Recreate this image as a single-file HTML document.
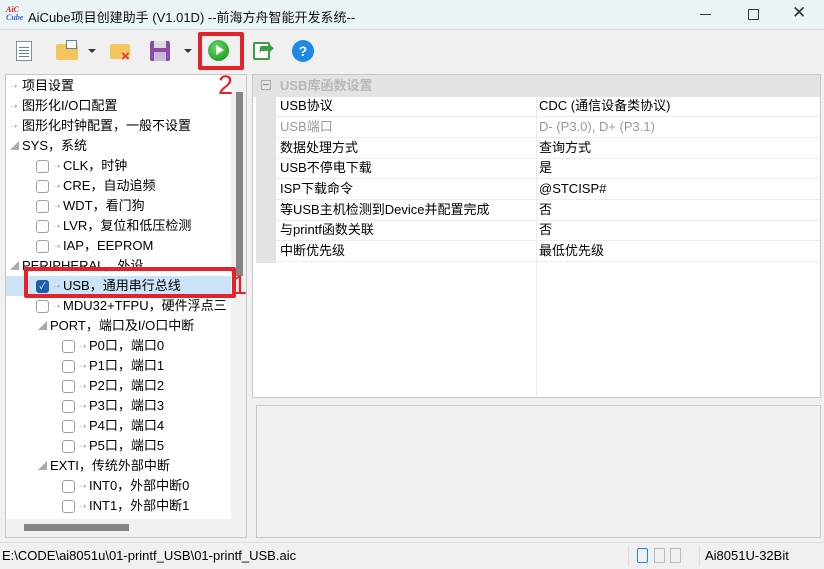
<!DOCTYPE html>
<html><head><meta charset="utf-8"><style>
*{margin:0;padding:0;box-sizing:border-box}
body{width:824px;height:569px;background:#f0f0f0;font-family:"Liberation Sans","Noto Sans CJK SC",sans-serif;font-size:13px;color:#000;position:relative;overflow:hidden}
.a{position:absolute;white-space:nowrap}
.t{position:absolute;white-space:nowrap;line-height:20px;height:20px}
.cb{position:absolute;width:13px;height:13px;border:1px solid #a0a0a0;border-radius:3px;background:#fff;top:4px}
.ar{color:#aaa;font-size:9px;position:absolute;top:0}
.row{position:absolute;left:276px;width:544px;height:21px;border-bottom:1px solid #ececec;line-height:20px}
.row span{position:absolute;left:4px}
.row b{font-weight:normal;position:absolute;left:263px}
.red{z-index:10}
</style></head><body>
<!-- title bar -->
<div class="a" style="left:0;top:0;width:824px;height:30px;background:#eaf3f6;border-bottom:1px solid #d8dde0"></div>
<div class="a" style="left:6px;top:6px;font:italic bold 8px 'Liberation Serif',serif;color:#c22;line-height:8px">AiC<br><span style="color:#36c">Cube</span></div>
<div class="a" style="left:28px;top:7px;font-size:13px;color:#111">AiCube项目创建助手 (V1.01D) --前海方舟智能开发系统--</div>
<div class="a" style="left:700px;top:14px;width:11px;height:1px;background:#333"></div>
<div class="a" style="left:748px;top:9px;width:11px;height:11px;border:1px solid #333;border-radius:1px"></div>
<div class="a" style="left:792px;top:3px;font-size:17px;color:#333">✕</div>
<!-- toolbar -->
<div class="a" style="left:16px;top:41px;width:16px;height:20px;background:#fff;border:1px solid #7a8fa8"></div>
<div class="a" style="left:19px;top:47px;width:10px;height:1px;background:#58a;box-shadow:0 3px #58a,0 6px #58a,0 9px #58a"></div>
<div class="a" style="left:56px;top:44px;width:22px;height:16px;background:#f3c55c;border-radius:2px"></div>
<div class="a" style="left:66px;top:40px;width:11px;height:9px;background:#fff;border:1px solid #58a"></div>
<div class="a" style="left:88px;top:49px;border:4px solid transparent;border-top:4px solid #333"></div>
<div class="a" style="left:110px;top:44px;width:20px;height:15px;background:#f3c55c;border-radius:2px"></div>
<div class="a" style="left:121px;top:48px;color:#e33;font-size:15px;font-weight:bold">×</div>
<div class="a" style="left:150px;top:41px;width:20px;height:20px;background:#8a4ca6;border-radius:2px"></div>
<div class="a" style="left:154px;top:41px;width:12px;height:7px;background:#ddd"></div>
<div class="a" style="left:154px;top:52px;width:12px;height:9px;background:#c9b7d6"></div>
<div class="a" style="left:184px;top:49px;border:4px solid transparent;border-top:4px solid #333"></div>
<div class="a" style="left:208px;top:40px;width:21px;height:21px;border-radius:50%;background:radial-gradient(circle at 40% 35%,#6d6,#181)"></div>
<div class="a" style="left:216px;top:45px;border-left:8px solid #fff;border-top:5px solid transparent;border-bottom:5px solid transparent"></div>
<div class="a" style="left:253px;top:42px;width:17px;height:18px;border:2px solid #3a9c4a;border-radius:2px;background:#fff"></div>
<div class="a" style="left:259px;top:38px;color:#3a9c4a;font-size:18px;font-weight:bold">➦</div>
<div class="a" style="left:292px;top:40px;width:22px;height:22px;border-radius:50%;background:#1e88e5;color:#fff;text-align:center;line-height:22px;font-weight:bold;font-size:14px">?</div>
<!-- left panel -->
<div class="a" style="left:5px;top:74px;width:242px;height:464px;background:#fff;border:1px solid #c8c8c8"></div>
<div class="a" style="left:231px;top:75px;width:15px;height:447px;background:#f0f0f0"></div>
<div class="a" style="left:236px;top:92px;width:7px;height:184px;background:#858585"></div>
<div class="a" style="left:6px;top:519px;width:240px;height:18px;background:#f0f0f0"></div>
<div class="a" style="left:24px;top:524px;width:105px;height:7px;background:#858585"></div>
<div class="a" style="left:6px;top:276px;width:225px;height:20px;background:#cce4f7"></div>
<div style="position:absolute;left:0;top:0;width:231px;height:519px;overflow:hidden">
<div class="t" style="left:10px;top:76px"><span class="ar" style="left:0">➝</span><span style="margin-left:12px">项目设置</span></div>
<div class="t" style="left:10px;top:96px"><span class="ar">➝</span><span style="margin-left:12px">图形化I/O口配置</span></div>
<div class="t" style="left:10px;top:116px"><span class="ar">➝</span><span style="margin-left:12px">图形化时钟配置，一般不设置</span></div>
<div class="t" style="left:10px;top:136px"><span class="ar">◢</span><span style="margin-left:12px">SYS，系统</span></div>
<div class="t" style="left:36px;top:156px"><i class="cb"></i><span class="ar" style="left:17px">➝</span><span style="margin-left:27px">CLK，时钟</span></div>
<div class="t" style="left:36px;top:176px"><i class="cb"></i><span class="ar" style="left:17px">➝</span><span style="margin-left:27px">CRE，自动追频</span></div>
<div class="t" style="left:36px;top:196px"><i class="cb"></i><span class="ar" style="left:17px">➝</span><span style="margin-left:27px">WDT，看门狗</span></div>
<div class="t" style="left:36px;top:216px"><i class="cb"></i><span class="ar" style="left:17px">➝</span><span style="margin-left:27px">LVR，复位和低压检测</span></div>
<div class="t" style="left:36px;top:236px"><i class="cb"></i><span class="ar" style="left:17px">➝</span><span style="margin-left:27px">IAP，EEPROM</span></div>
<div class="t" style="left:10px;top:256px"><span class="ar">◢</span><span style="margin-left:12px">PERIPHERAL，外设</span></div>
<div class="t" style="left:36px;top:276px"><i class="cb" style="background:#1d5fa8;border-color:#1d5fa8;color:#fff;font-size:9px;line-height:11px;text-align:center;font-style:normal">✓</i><span class="ar" style="left:17px">➝</span><span style="margin-left:27px">USB，通用串行总线</span></div>
<div class="t" style="left:36px;top:296px"><i class="cb"></i><span class="ar" style="left:17px">➝</span><span style="margin-left:27px">MDU32+TFPU，硬件浮点三</span></div>
<div class="t" style="left:38px;top:316px"><span class="ar">◢</span><span style="margin-left:12px">PORT，端口及I/O口中断</span></div>
<div class="t" style="left:62px;top:336px"><i class="cb"></i><span class="ar" style="left:17px">➝</span><span style="margin-left:27px">P0口，端口0</span></div>
<div class="t" style="left:62px;top:356px"><i class="cb"></i><span class="ar" style="left:17px">➝</span><span style="margin-left:27px">P1口，端口1</span></div>
<div class="t" style="left:62px;top:376px"><i class="cb"></i><span class="ar" style="left:17px">➝</span><span style="margin-left:27px">P2口，端口2</span></div>
<div class="t" style="left:62px;top:396px"><i class="cb"></i><span class="ar" style="left:17px">➝</span><span style="margin-left:27px">P3口，端口3</span></div>
<div class="t" style="left:62px;top:416px"><i class="cb"></i><span class="ar" style="left:17px">➝</span><span style="margin-left:27px">P4口，端口4</span></div>
<div class="t" style="left:62px;top:436px"><i class="cb"></i><span class="ar" style="left:17px">➝</span><span style="margin-left:27px">P5口，端口5</span></div>
<div class="t" style="left:38px;top:456px"><span class="ar">◢</span><span style="margin-left:12px">EXTI，传统外部中断</span></div>
<div class="t" style="left:62px;top:476px"><i class="cb"></i><span class="ar" style="left:17px">➝</span><span style="margin-left:27px">INT0，外部中断0</span></div>
<div class="t" style="left:62px;top:496px"><i class="cb"></i><span class="ar" style="left:17px">➝</span><span style="margin-left:27px">INT1，外部中断1</span></div>
<div class="t" style="left:62px;top:516px"><i class="cb"></i></div>
</div>
<!-- right panel -->
<div class="a" style="left:252px;top:74px;width:569px;height:324px;background:#fff;border:1px solid #c8c8c8"></div>
<div class="a" style="left:253px;top:75px;width:567px;height:22px;background:#e3e3e3"></div>
<div class="a" style="left:256px;top:97px;width:20px;height:166px;background:#e3e3e3"></div>
<div class="a" style="left:261px;top:80px;width:10px;height:10px;border:1px solid #aaa"></div>
<div class="a" style="left:263px;top:84px;width:6px;height:1px;background:#888"></div>
<div class="a" style="left:280px;top:77px;color:#b8b8b8;font-weight:bold;line-height:18px">USB库函数设置</div>
<div class="a" style="left:536px;top:97px;width:1px;height:300px;background:#ececec"></div>
<div class="row" style="top:96px"><span>USB协议</span><b>CDC (通信设备类协议)</b></div>
<div class="row" style="top:117px;color:#999"><span>USB端口</span><b>D- (P3.0), D+ (P3.1)</b></div>
<div class="row" style="top:138px"><span>数据处理方式</span><b>查询方式</b></div>
<div class="row" style="top:158px"><span>USB不停电下载</span><b>是</b></div>
<div class="row" style="top:179px"><span>ISP下载命令</span><b>@STCISP#</b></div>
<div class="row" style="top:200px"><span>等USB主机检测到Device并配置完成</span><b>否</b></div>
<div class="row" style="top:220px"><span>与printf函数关联</span><b>否</b></div>
<div class="row" style="top:241px"><span>中断优先级</span><b>最低优先级</b></div>
<div class="a" style="left:256px;top:405px;width:565px;height:133px;background:#f0f0f0;border:1px solid #c8c8c8"></div>
<!-- status -->
<div class="a" style="left:0;top:542px;width:824px;height:27px;background:#f0f0f0;border-top:1px solid #ddd"></div>
<div class="a" style="left:2px;top:548px;font-size:13px">E:\CODE\ai8051u\01-printf_USB\01-printf_USB.aic</div>
<div class="a" style="left:628px;top:546px;width:1px;height:20px;background:#ddd"></div>
<div class="a" style="left:637px;top:548px;width:11px;height:15px;border:1px solid #1e88e5;border-radius:2px"></div>
<div class="a" style="left:654px;top:548px;width:11px;height:15px;border:1px solid #bbb"></div>
<div class="a" style="left:670px;top:548px;width:11px;height:15px;border:1px solid #bbb"></div>
<div class="a" style="left:699px;top:546px;width:1px;height:20px;background:#ddd"></div>
<div class="a" style="left:705px;top:548px;font-size:13px">Ai8051U-32Bit</div>
<!-- red annotations -->
<div class="a red" style="left:198px;top:32px;width:46px;height:38px;border:4px solid #e5222a;border-radius:2px"></div>
<div class="a red" style="left:218px;top:72px;color:#e5222a;font-size:27px;line-height:27px">2</div>
<div class="a red" style="left:24px;top:267px;width:212px;height:31px;border:4px solid #e5222a;border-radius:2px"></div>
<div class="a red" style="left:232px;top:272px;color:#e5222a;font-size:27px;line-height:27px">1</div>
</body></html>
